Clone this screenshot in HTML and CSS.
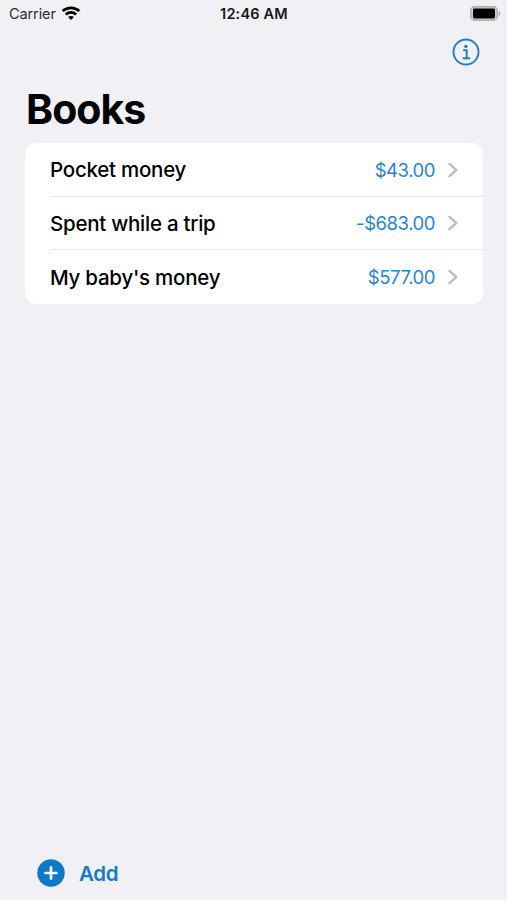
FILE: index.html
```html
<!DOCTYPE html>
<html lang="en">
<head>
<meta charset="UTF-8">
<meta name="viewport" content="width=device-width, initial-scale=1.0">
<title>Books</title>
<link rel="stylesheet" href="styles.css">
</head>
<body>
<div class="status-bar">
<div class="carrier">
<span>Carrier</span>
<svg class="wifi" width="20" height="14" viewBox="0 0 20 14" fill="none" stroke="#000" stroke-width="2.7">
<path d="M1.7 5.1C6.3 .7 13.7 .7 18.3 5.1"/>
<path d="M4.8 8.4C7.8 5.6 12.2 5.6 15.2 8.4"/>
<path d="M10 14L7.1 11C8.8 9.5 11.2 9.5 12.9 11Z" fill="#000" stroke="none"/>
</svg>
</div>
<div class="time">12:46 AM</div>
<svg class="battery" width="31" height="15" viewBox="0 0 31 15">
<rect x=".8" y=".8" width="26.4" height="13.4" rx="3.8" fill="#d0d0d3" stroke="#adadb0" stroke-width="1.4"/>
<rect x="3" y="2.6" width="22" height="9.8" rx="1.4" fill="#000"/>
<path d="M28.7 5.2C30.9 6.1 30.9 8.9 28.7 9.8Z" fill="#a3a3a6"/>
</svg>
</div>
<div class="toolbar">
<a class="info" href="#" aria-label="Info">
<svg width="28" height="28" viewBox="0 0 28 28" fill="none" stroke="#1c7fca" stroke-width="1.9">
<circle cx="14" cy="14" r="12.5"/>
<circle cx="13.9" cy="8.4" r="1.7" fill="#1c7fca" stroke="none"/>
<path d="M11.2 12.3H14.7V19.8M10.8 20.2H18"/>
</svg>
</a>
</div>
<h1>Books</h1>
<div class="book-list">
<a class="book" href="#">
<span class="book-name">Pocket money</span>
<span class="amount">$43.00</span>
<svg class="chevron" width="10" height="16" viewBox="0 0 10 16"><path d="M1.5 1.8L8.3 8L1.5 14.2"/></svg>
</a>
<a class="book" href="#">
<span class="book-name">Spent while a trip</span>
<span class="amount">-$683.00</span>
<svg class="chevron" width="10" height="16" viewBox="0 0 10 16"><path d="M1.5 1.8L8.3 8L1.5 14.2"/></svg>
</a>
<a class="book" href="#">
<span class="book-name">My baby's money</span>
<span class="amount">$577.00</span>
<svg class="chevron" width="10" height="16" viewBox="0 0 10 16"><path d="M1.5 1.8L8.3 8L1.5 14.2"/></svg>
</a>
</div>
<a class="add" href="#">
<svg width="28" height="28" viewBox="0 0 28 28">
<circle cx="14" cy="14" r="13.7" fill="#0d79cb"/>
<path d="M14 8.4V19.6M8.4 14H19.6" stroke="#fff" stroke-width="2.6" stroke-linecap="round"/>
</svg>
<span>Add</span>
</a>
</body>
</html>
```

FILE: styles.css
```css
* { box-sizing: border-box; }
body { font-family: Inter, "Liberation Sans", sans-serif; margin: 0; height: 100vh; display: flex; flex-direction: column; background-color: #f1f0f5; color: #000; overflow: hidden; }
a { text-decoration: none; color: inherit; }
svg { display: block; flex-shrink: 0; }
.status-bar { display: grid; grid-template-columns: 1fr auto 1fr; align-items: center; height: 27px; padding: 0 6px 0 7px; }
.carrier { display: flex; align-items: center; gap: 5px; margin-left: 2px; font-size: 14.5px; letter-spacing: -0.1px; color: #2b2b2d; }
.wifi { margin-bottom: 2px; }
.time { font-size: 14.5px; font-weight: 600; letter-spacing: 0.2px; color: #161618; }
.battery { justify-self: end; }
.toolbar { display: flex; justify-content: flex-end; align-items: center; height: 50px; padding-right: 27px; }
h1 { margin: 7px 0 0 26px; font-size: 41px; line-height: 50px; font-weight: 700; letter-spacing: -1px; }
.book-list { margin: 9px 24px 0 25px; background-color: #fff; border-radius: 11px; }
.book { display: flex; align-items: center; height: 53.67px; margin-left: 25px; padding: 1px 25px 0 0; border-bottom: 1px solid #e7e7ea; }
.book:last-child { padding-top: 0; border-bottom: none; }
.book-name { flex: 1; font-size: 20.5px; font-weight: 550; letter-spacing: -0.25px; }
.amount { font-size: 18.5px; letter-spacing: -0.45px; color: #2785cb; }
.chevron { margin-left: 13px; fill: none; stroke: #bdbdc0; stroke-width: 2.4; stroke-linecap: round; stroke-linejoin: round; }
.add { display: flex; align-items: center; gap: 14px; margin: auto auto 13px 37px; font-size: 20.5px; font-weight: 600; letter-spacing: -0.3px; color: #1878c6; }
```
